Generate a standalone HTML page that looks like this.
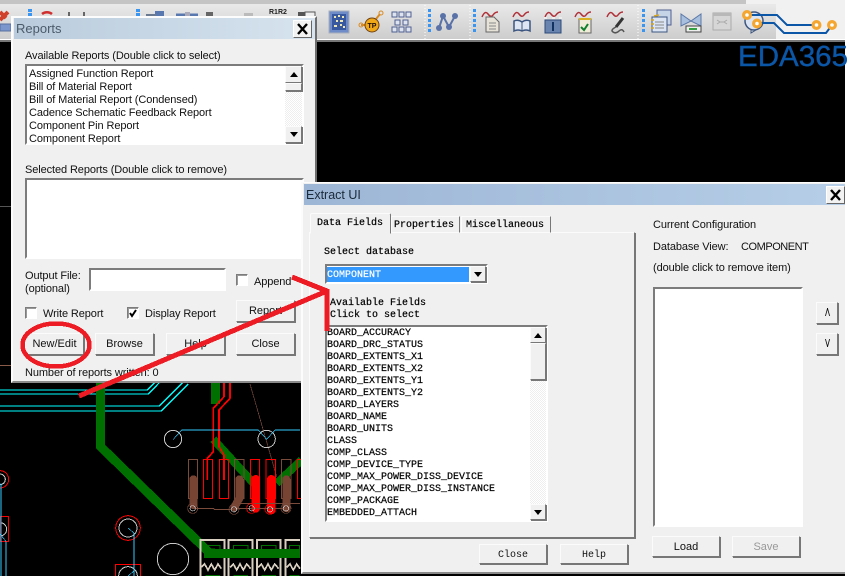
<!DOCTYPE html>
<html><head><meta charset="utf-8"><style>
html,body{margin:0;padding:0;background:#fff}
#p{position:relative;width:864px;height:576px;overflow:hidden;background:#fff;font:11px "Liberation Sans",sans-serif;color:#111}
#p div,#p span{position:absolute;box-sizing:border-box}
#p span{white-space:nowrap;line-height:12px}
span.s{letter-spacing:-.1px;margin-top:1px}
.m{font-family:"Liberation Mono",monospace;font-size:10px;letter-spacing:0;color:#000}
span.m{margin-top:2px;-webkit-text-stroke:.2px}
.btn{background:#f0f0f0;border:1px solid;border-color:#fbfbfb #777 #777 #fbfbfb;box-shadow:1px 1px 0 #777;text-align:center;line-height:20px;font-size:11px;color:#111}
.sun{background:#fff;border:2px solid;border-color:#7c7c7c #fff #fff #7c7c7c}
.dlg{background:#f0f0f0}
.sb{background:repeating-conic-gradient(#eeeeee 0 25%,#fff 0 50%) 0 0/2px 2px}
.ar{width:0;height:0;border-left:4px solid transparent;border-right:4px solid transparent}
.cb{width:12px;height:12px;background:#fff;border:1px solid;border-color:#7c7c7c #fff #fff #7c7c7c;box-shadow:inset 1px 1px 0 #999}
.x{background:#f2f2f2;border:1px solid;border-color:#fff #666 #666 #fff}
</style></head><body><div id="p">

<div style="left:0;top:0;width:845px;height:576px;background:#000"></div>

<svg style="position:absolute;left:0;top:380px" width="310" height="196" viewBox="0 0 930 588" shape-rendering="crispEdges" fill="none">
<g stroke="#00ffff" stroke-width="4"><path d="M0 30H442L472 0M0 42H445L478 8M0 78H478L548 8M0 93H484L565 12"/></g>
<path d="M302 0V200L630 520" stroke="#007000" stroke-width="27"/>
<path d="M647 0V72" stroke="#007000" stroke-width="27"/>
<path d="M640 178L770 320M905 240L830 310" stroke="#007000" stroke-width="24"/>
<path d="M750 12L830 290" stroke="#7a4a3a" stroke-width="2"/>
<g stroke="#c8c8c8" stroke-width="3"><circle cx="519" cy="177" r="26"/><circle cx="800" cy="177" r="26"/><circle cx="519" cy="537" r="47"/><circle cx="384" cy="444" r="27"/><circle cx="0" cy="298" r="16"/><circle cx="0" cy="448" r="20"/><circle cx="384" cy="588" r="28"/></g>
<g stroke="#ff0000" stroke-width="3"><circle cx="384" cy="444" r="37"/><circle cx="0" cy="298" r="26"/><rect x="0" y="410" width="26" height="74"/><rect x="347" y="553" width="74" height="70"/>
<rect x="610" y="238" width="28" height="118"/><rect x="658" y="238" width="28" height="118"/><rect x="751" y="238" width="28" height="118"/><rect x="798" y="238" width="28" height="118"/><rect x="892" y="238" width="20" height="118"/></g>
<g stroke="#7a4a3a" stroke-width="3"><rect x="565" y="238" width="28" height="118"/><rect x="704" y="238" width="28" height="118"/><rect x="845" y="238" width="28" height="118"/></g>
<path d="M672 0V50L640 85V190L640 215L622 235V300M690 0V55L657 90V200L672 225V300" stroke="#ff0000" stroke-width="5"/>
<path d="M580 298V375M718 298V355L703 382M859 298V385" stroke="#774433" stroke-width="24" stroke-linecap="round"/>
<path d="M767 298V385M814 298V390" stroke="#ff0000" stroke-width="26" stroke-linecap="round"/>
<path d="M580 385H640L643 388H700M715 370H900M700 385H860" stroke="#7a4a3a" stroke-width="3"/>
<g stroke="#7a4a3a" stroke-width="2"><circle cx="578" cy="385" r="15"/><circle cx="702" cy="388" r="15"/><circle cx="858" cy="385" r="15"/></g>
<g stroke="#ff0000" stroke-width="2"><circle cx="755" cy="385" r="15"/><circle cx="810" cy="388" r="15"/></g>
<g stroke="#c8c8c8" stroke-width="2"><circle cx="578" cy="385" r="8"/><circle cx="702" cy="388" r="8"/><circle cx="858" cy="385" r="8"/><circle cx="755" cy="385" r="8"/><circle cx="810" cy="388" r="8"/></g>
<g stroke="#33ccff" stroke-width="2"><path d="M520 178L545 150H775L800 178L825 150H900"/><path d="M3 310V588M18 484V588M0 462L18 484M385 444L402 460V588M402 572L385 588"/></g>
<g stroke="#d8cfc0" stroke-width="6"><path d="M601 588V480H673V588M686 588V480H757V588M771 588V480H842V588M856 588V480H900"/></g>
<g stroke="#007000" stroke-width="3"><rect x="616" y="496" width="44" height="18"/><rect x="700" y="496" width="44" height="18"/><rect x="784" y="496" width="44" height="18"/><rect x="868" y="496" width="30" height="18"/><path d="M616 586H660M700 586H744M784 586H828M868 586H898"/></g>
<g stroke="#d8cfc0" stroke-width="5"><path d="M604 562L614 552L624 570L634 552L644 570L654 552L664 566M690 562L700 552L710 570L720 552L730 570L740 552L752 566M774 562L784 552L794 570L804 552L814 570L824 552L836 566M860 562L870 552L880 570L890 552L900 566"/></g>
<path d="M620 520H900" stroke="#007000" stroke-width="27"/>
<rect x="612" y="506" width="33" height="28" fill="#007000"/>
</svg>
<div style="left:0;top:206px;width:11px;height:1px;background:#555"></div>
<div style="left:0;top:365px;width:11px;height:1px;background:#8a5a48"></div>

<!-- toolbar -->
<div style="left:0;top:0;width:845px;height:41px;background:#f1f1f1"></div>
<div style="left:0;top:0;width:746px;height:4px;background:#c4c4c4"></div>
<div style="left:0;top:4px;width:776px;height:35px;background:linear-gradient(#e9e9e9,#cdcdcd)"></div>
<div style="left:0;top:39px;width:845px;height:1px;background:#fff"></div>
<div style="left:0;top:40px;width:845px;height:2px;background:#777"></div>

<svg style="position:absolute;left:0;top:0" width="845" height="42" fill="none">
<g fill="#3a95f0"><rect x="28" y="9" width="4" height="3"/><rect x="28" y="13" width="4" height="3"/><rect x="136" y="9" width="4" height="3"/><rect x="136" y="13" width="4" height="3"/>
<rect x="428" y="9" width="3" height="3"/><rect x="428" y="14" width="3" height="3"/><rect x="428" y="19" width="3" height="3"/><rect x="428" y="24" width="3" height="3"/><rect x="428" y="29" width="3" height="3"/>
<rect x="473" y="9" width="3" height="3"/><rect x="473" y="14" width="3" height="3"/><rect x="473" y="19" width="3" height="3"/><rect x="473" y="24" width="3" height="3"/><rect x="473" y="29" width="3" height="3"/>
<rect x="642" y="9" width="3" height="3"/><rect x="642" y="14" width="3" height="3"/><rect x="642" y="19" width="3" height="3"/><rect x="642" y="24" width="3" height="3"/><rect x="642" y="29" width="3" height="3"/></g>
<path d="M0 20L8 12M0 12L6 18" stroke="#d0402a" stroke-width="4"/>
<rect x="0" y="24" width="11" height="7" fill="#7a96cc" stroke="#5a70a0"/>
<path d="M42 14a8 8 0 0 1 10 0" stroke="#d03030" stroke-width="2.5"/>
<path d="M69 12v4M84 12v4" stroke="#666" stroke-width="2"/>
<rect x="155" y="11" width="9" height="7" fill="#5a78b0"/><path d="M146 15h10" stroke="#6a7a90" stroke-width="2"/>
<path d="M176 15h22" stroke="#5a78b0" stroke-width="3"/><rect x="185" y="12" width="5" height="5" fill="#aab"/>
<rect x="206" y="12" width="7" height="5" fill="#666"/><rect x="244" y="13" width="9" height="4" fill="#bbb"/>
<text x="269" y="14" font-family="Liberation Sans" font-size="7" fill="#222" font-weight="bold">R1R2</text>
<rect x="298" y="12" width="9" height="6" fill="#555"/><rect x="305" y="12" width="10" height="8" fill="#eee" stroke="#555"/>

<rect x="329" y="11" width="20" height="22" fill="#6f8cc8" stroke="#a8b0bc"/>
<rect x="332" y="14" width="14" height="16" fill="#38589f"/>
<g fill="#f0e8b0"><rect x="334" y="16" width="2" height="2"/><rect x="338" y="15" width="2" height="2"/><rect x="342" y="16" width="2" height="2"/><rect x="336" y="20" width="2" height="2"/><rect x="340" y="20" width="3" height="2"/><rect x="334" y="25" width="3" height="2"/><rect x="340" y="24" width="2" height="2"/><rect x="343" y="26" width="2" height="2"/></g>
<path d="M361 25h6M376 19l4-5" stroke="#d88a20" stroke-width="2"/><circle cx="372" cy="25" r="7" fill="#f0a818" stroke="#704010"/><text x="367.5" y="28" font-family="Liberation Sans" font-size="7" font-weight="bold" fill="#201000">TP</text><circle cx="381" cy="13" r="2" stroke="#d88a20"/><circle cx="361" cy="25" r="2" stroke="#d88a20"/>
<g fill="#dde4f0" stroke="#4f6090"><rect x="392" y="12" width="5" height="5"/><rect x="399" y="12" width="5" height="5"/><rect x="406" y="12" width="5" height="5"/><rect x="395" y="20" width="5" height="5"/><rect x="403" y="20" width="5" height="5"/><rect x="392" y="27" width="5" height="5"/><rect x="399" y="27" width="5" height="5"/><rect x="406" y="27" width="5" height="5"/></g>
<path d="M425 5v34M470 5v34M638 5v34" stroke="#fff" stroke-dasharray="1 2"/>
<path d="M439 28L443 16L449 27L455 16" stroke="#5a72a8" stroke-width="2"/><g fill="#5a72a8"><circle cx="439" cy="28" r="3"/><circle cx="443" cy="16" r="3"/><circle cx="449" cy="27" r="3"/><circle cx="455" cy="16" r="3"/></g>

<g stroke="#b03038" stroke-width="1.5"><path d="M482 17q3-7 6-3t5 1 5-3M513 17q3-7 6-3t5 1 5-3M545 17q3-7 6-3t5 1 5-3M575 17q3-7 6-3t5 1 5-3M607 17q3-7 6-3t5 1 5-3"/></g>
<path d="M486 17h8l5 5v10h-13z" fill="#e6e2d8" stroke="#666"/><path d="M489 23h7M489 26h7M489 29h7" stroke="#888"/>
<path d="M514 21q4-2 8 1q4-3 8-1v10q-4-2-8 0q-4-2-8 0z" fill="#dde6f2" stroke="#3d5680" stroke-width="1.5"/><path d="M522 22v9" stroke="#3d5680"/>
<rect x="545" y="20" width="16" height="13" fill="#6a84b0" stroke="#2d4a78"/><path d="M544 18h3M552 18h3M559 18h3" stroke="#eee" stroke-width="2"/><path d="M553 22v9" stroke="#12325f" stroke-width="2"/>
<rect x="579" y="19" width="12" height="14" fill="#f0ecd8" stroke="#666"/><path d="M579 19h12" stroke="#d8b020" stroke-width="2"/><path d="M581 27l3 3 4-6" stroke="#108030" stroke-width="2"/>
<path d="M623 18l-7 9" stroke="#333" stroke-width="3"/><path d="M616 27q-6 3-3 5t6-1 5 1" stroke="#555" stroke-width="1.5"/>

<rect x="657" y="10" width="14" height="15" fill="#c6d4e8" stroke="#4f6090"/>
<rect x="652" y="17" width="15" height="15" fill="#dbe4f2" stroke="#3d5680"/><path d="M655 22h9M655 25h9M655 28h9" stroke="#888"/><path d="M651 20h3M651 24h3M651 28h3M654 16l5-1" stroke="#d8a820" stroke-width="1.5"/>
<path d="M681 14L691 21L701 14V26L691 21L681 26z" fill="#a8c0de" stroke="#5a78a8"/><rect x="686" y="26" width="15" height="6" fill="#eee" stroke="#444"/><rect x="689" y="28" width="8" height="2" fill="#30a040"/>
<rect x="713" y="13" width="18" height="17" fill="#d6d6d6" stroke="#aaa"/><rect x="713" y="13" width="18" height="3" fill="#b8b8b8"/><path d="M717 20l3 2-3 2M727 20l-3 2 3 2M720 22h4" stroke="#aaa"/>
<ellipse cx="754" cy="21" rx="9" ry="9" fill="#dbe4f2" stroke="#3d5680" stroke-width="1.5"/><path d="M751 30l0 3 5-3" stroke="#3d5680"/>
<g stroke="#0b56a6" stroke-width="2"><path d="M747 15H777L787 25H816M757 23H774L784 33H826L832 25"/></g>
<g stroke="#f4a631" stroke-width="3.2" fill="#fff"><circle cx="747" cy="15" r="3.4"/><circle cx="757" cy="23.5" r="3.4"/><circle cx="816.5" cy="25" r="3.4"/><circle cx="832" cy="25" r="3.4"/></g>
</svg>
<svg style="position:absolute;left:730px;top:40px" width="134" height="30"><text x="8" y="26" font-family="Liberation Sans" font-size="29" fill="#0b56a6" stroke="#0b56a6" stroke-width=".4" textLength="110" lengthAdjust="spacingAndGlyphs">EDA365</text></svg>

<!-- Reports -->
<div class="dlg" style="left:11px;top:16px;width:306px;height:367px;border:2px solid;border-color:#fcfcfc #6e6e6e #8a8a8a #fcfcfc">
  <div style="left:1px;top:0;width:301px;height:21px;background:linear-gradient(90deg,#b9cbdc,#d7e4ef)"></div>
  <span style="left:3px;top:5px;font-size:13px;color:#4c5b6b">Reports</span>
  <div class="x" style="left:280px;top:2px;width:19px;height:18px"><svg width="17" height="16" style="position:absolute;left:0;top:0"><path d="M4 3L13 13M13 3L4 13" stroke="#000" stroke-width="2.4"/></svg></div>
</div>
<span class="s" style="left:25px;top:49px">Available Reports (Double click to select)</span>
<div class="sun" style="left:25px;top:64px;width:279px;height:81px"></div>
<span class="s" style="left:29px;top:67px">Assigned Function Report</span>
<span class="s" style="left:29px;top:80px">Bill of Material Report</span>
<span class="s" style="left:29px;top:93px">Bill of Material Report (Condensed)</span>
<span class="s" style="left:29px;top:106px">Cadence Schematic Feedback Report</span>
<span class="s" style="left:29px;top:119px">Component Pin Report</span>
<span class="s" style="left:29px;top:132px">Component Report</span>
<div class="sb" style="left:285px;top:66px;width:17px;height:77px"></div>
<div class="btn" style="left:285px;top:66px;width:17px;height:17px"></div><div class="ar" style="left:290px;top:72px;border-bottom:5px solid #000"></div>
<div class="btn" style="left:285px;top:83px;width:17px;height:8px"></div>
<div class="btn" style="left:285px;top:126px;width:17px;height:17px"></div><div class="ar" style="left:290px;top:132px;border-top:5px solid #000"></div>
<span class="s" style="left:25px;top:163px">Selected Reports (Double click to remove)</span>
<div class="sun" style="left:25px;top:178px;width:279px;height:81px"></div>
<span class="s" style="left:25px;top:269px">Output File:</span>
<span class="s" style="left:25px;top:282px">(optional)</span>
<div class="sun" style="left:89px;top:268px;width:137px;height:23px"></div>
<div class="cb" style="left:236px;top:274px"></div><span class="s" style="left:254px;top:275px">Append</span>
<div class="cb" style="left:25px;top:307px"></div><span class="s" style="left:43px;top:307px">Write Report</span>
<div class="cb" style="left:127px;top:307px"><svg width="10" height="10" style="position:absolute;left:0;top:0"><path d="M2 5L4 8L8 2" stroke="#000" stroke-width="2" fill="none"/></svg></div><span class="s" style="left:145px;top:307px">Display Report</span>
<div class="btn" style="left:236px;top:300px;width:59px;height:22px">Report</div>
<div class="btn" style="left:25px;top:333px;width:59px;height:22px">New/Edit</div>
<div class="btn" style="left:95px;top:333px;width:59px;height:22px">Browse</div>
<div class="btn" style="left:166px;top:333px;width:59px;height:22px">Help</div>
<div class="btn" style="left:236px;top:333px;width:59px;height:22px">Close</div>
<span class="s" style="left:25px;top:366px">Number of reports written: 0</span>

<!-- Extract -->
<div class="dlg" style="left:301px;top:182px;width:544px;height:392px;border-left:2px solid #fcfcfc;border-top:1px solid #fcfcfc;border-bottom:2px solid #8a8a8a">
  <div style="left:1px;top:1px;width:541px;height:21px;background:linear-gradient(90deg,#9db6d5,#b6cee7)"></div>
  <span style="left:3px;top:6px;font-size:12.5px;color:#1a2a3a">Extract UI</span>
  <div class="x" style="left:523px;top:3px;width:19px;height:18px"><svg width="17" height="16" style="position:absolute;left:0;top:0"><path d="M4 3L13 13M13 3L4 13" stroke="#000" stroke-width="2.4"/></svg></div>
</div>
<div style="left:309px;top:232px;width:326px;height:306px;border:1px solid;border-color:#fbfbfb #777 #777 #fbfbfb;box-shadow:1px 1px 0 #777"></div>
<div class="dlg" style="left:310px;top:213px;width:81px;height:21px;border:1px solid;border-color:#fbfbfb #777 #f0f0f0 #fbfbfb;border-radius:2px 2px 0 0"></div>
<div class="dlg" style="left:391px;top:216px;width:69px;height:17px;border:1px solid;border-color:#fbfbfb #777 #fbfbfb #fbfbfb"></div>
<div class="dlg" style="left:461px;top:216px;width:90px;height:17px;border:1px solid;border-color:#fbfbfb #777 #fbfbfb #fbfbfb"></div>
<span class="m" style="left:317px;top:216px">Data Fields</span>
<span class="m" style="left:394px;top:218px">Properties</span>
<span class="m" style="left:466px;top:218px">Miscellaneous</span>
<span class="m" style="left:324px;top:245px">Select database</span>
<div class="sun" style="left:325px;top:264px;width:163px;height:20px"></div>
<div style="left:327px;top:267px;width:142px;height:15px;background:#3399ff"></div>
<span class="m" style="left:327px;top:268px;color:#fff">COMPONENT</span>
<div class="btn" style="left:470px;top:266px;width:16px;height:16px"></div><div class="ar" style="left:474px;top:272px;border-top:5px solid #000"></div>
<span class="m" style="left:330px;top:296px">Available Fields</span>
<span class="m" style="left:330px;top:308px">Click to select</span>
<div class="sun" style="left:325px;top:325px;width:223px;height:197px"></div>
<span class="m" style="left:327px;top:326px">BOARD_ACCURACY</span>
<span class="m" style="left:327px;top:338px">BOARD_DRC_STATUS</span>
<span class="m" style="left:327px;top:350px">BOARD_EXTENTS_X1</span>
<span class="m" style="left:327px;top:362px">BOARD_EXTENTS_X2</span>
<span class="m" style="left:327px;top:374px">BOARD_EXTENTS_Y1</span>
<span class="m" style="left:327px;top:386px">BOARD_EXTENTS_Y2</span>
<span class="m" style="left:327px;top:398px">BOARD_LAYERS</span>
<span class="m" style="left:327px;top:410px">BOARD_NAME</span>
<span class="m" style="left:327px;top:422px">BOARD_UNITS</span>
<span class="m" style="left:327px;top:434px">CLASS</span>
<span class="m" style="left:327px;top:446px">COMP_CLASS</span>
<span class="m" style="left:327px;top:458px">COMP_DEVICE_TYPE</span>
<span class="m" style="left:327px;top:470px">COMP_MAX_POWER_DISS_DEVICE</span>
<span class="m" style="left:327px;top:482px">COMP_MAX_POWER_DISS_INSTANCE</span>
<span class="m" style="left:327px;top:494px">COMP_PACKAGE</span>
<span class="m" style="left:327px;top:506px">EMBEDDED_ATTACH</span>
<div class="sb" style="left:530px;top:327px;width:16px;height:193px"></div>
<div class="btn" style="left:530px;top:327px;width:16px;height:16px"></div><div class="ar" style="left:534px;top:333px;border-bottom:5px solid #000"></div>
<div class="btn" style="left:530px;top:343px;width:16px;height:37px"></div>
<div class="btn" style="left:530px;top:504px;width:16px;height:16px"></div><div class="ar" style="left:534px;top:510px;border-top:5px solid #000"></div>
<div class="btn m" style="left:479px;top:544px;width:68px;height:20px;font-size:10px;line-height:21px">Close</div>
<div class="btn m" style="left:560px;top:544px;width:68px;height:20px;font-size:10px;line-height:21px">Help</div>
<span class="s" style="left:653px;top:218px">Current Configuration</span>
<span class="s" style="left:653px;top:240px">Database View:</span>
<span class="s" style="left:741px;top:240px;letter-spacing:-.45px">COMPONENT</span>
<span class="s" style="left:653px;top:261px">(double click to remove item)</span>
<div class="sun" style="left:653px;top:287px;width:150px;height:240px"></div>
<div class="btn" style="left:816px;top:302px;width:22px;height:22px;letter-spacing:-1px">/\</div>
<div class="btn" style="left:816px;top:333px;width:22px;height:22px;letter-spacing:-1px">\/</div>
<div class="btn" style="left:652px;top:536px;width:68px;height:21px;line-height:21px">Load</div>
<div class="btn" style="left:732px;top:536px;width:68px;height:21px;line-height:21px;color:#999">Save</div>

<!-- annotations -->
<svg style="position:absolute;left:0;top:0" width="864" height="576" fill="none" shape-rendering="crispEdges">
<ellipse cx="56" cy="345" rx="33.5" ry="21.5" stroke="#ed1c24" stroke-width="4.5"/>
<path d="M79 396L327 291M292 277L327 291L327 331" stroke="#ed1c24" stroke-width="5"/>
</svg>
</div></body></html>
